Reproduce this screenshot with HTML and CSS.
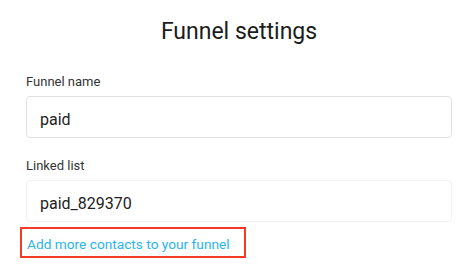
FILE: index.html
```html
<!DOCTYPE html>
<html lang="en">
<head>
<meta charset="utf-8">
<title>Funnel settings</title>
<link rel="stylesheet" href="styles.css">
</head>
<body>
<main class="panel">
  <h1 class="title">Funnel settings</h1>
  <div class="field">
    <label class="label" for="name">Funnel name</label>
    <input class="input" id="name" type="text" value="paid">
  </div>
  <div class="field">
    <label class="label" for="list">Linked list</label>
    <input class="input input-readonly" id="list" type="text" value="paid_829370" readonly>
  </div>
  <div class="highlight">
    <a class="link" href="#">Add more contacts to your funnel</a>
  </div>
</main>
</body>
</html>
```
FILE: styles.css
```css
html, body {
  margin: 0;
  padding: 0;
  background: #ffffff;
}
body {
  font-family: Roboto, "Noto Sans", Arial, sans-serif;
  color: #222;
}
.panel {
  padding: 18px 20px 0 26px;
  display: flex;
  flex-direction: column;
}
.title {
  margin: 0 0 29px;
  font-size: 23px;
  line-height: 27px;
  font-weight: 400;
  text-align: center;
  color: #1c1c1c;
}
.field {
  display: flex;
  flex-direction: column;
  margin-bottom: 20px;
}
.field + .field {
  margin-bottom: 5px;
}
.label {
  font-size: 13px;
  line-height: 16px;
  color: #333;
  margin-bottom: 6px;
}
.input {
  box-sizing: border-box;
  width: 100%;
  height: 42px;
  margin: 0;
  padding: 12px 12px 8px 13px;
  border: 1px solid #e2e2e2;
  border-radius: 4px;
  background: #fff;
  font-family: inherit;
  font-size: 16px;
  color: #222;
  outline: none;
}
.input-readonly {
  border-color: #f1f1f1;
}
.highlight {
  align-self: flex-start;
  margin-left: -6px;
  border: 2px solid #f33a26;
  padding: 5px 14px 2px 5px;
  line-height: 20px;
}
.link {
  font-size: 13.7px;
  color: #2bb3f0;
  text-decoration: none;
}
```
